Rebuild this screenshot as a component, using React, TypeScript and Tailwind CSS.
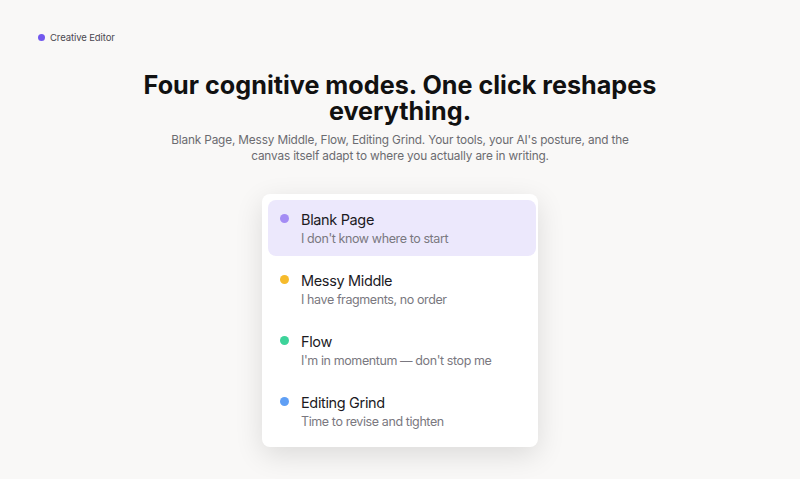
import React from 'react'

const modes = [
  { title: 'Blank Page', desc: "I don't know where to start", dot: 'bg-[#a48cf4]', active: true },
  { title: 'Messy Middle', desc: 'I have fragments, no order', dot: 'bg-[#f6bb2c]', active: false },
  { title: 'Flow', desc: "I'm in momentum — don't stop me", dot: 'bg-[#3dd39a]', active: false },
  { title: 'Editing Grind', desc: 'Time to revise and tighten', dot: 'bg-[#5f9ff5]', active: false },
]

export default function App() {
  return (
    <div className="min-h-screen bg-[#f9f8f7] font-['Inter',sans-serif] flex flex-col">
      <div className="flex items-center gap-[5px] pl-[38px] pt-[31px] h-[44px]">
        <div className="w-[7px] h-[7px] rounded-full bg-[#7258ee]" />
        <span className="text-[9.5px] leading-[12px] tracking-[-0.1px] text-[#4a4750]">Creative Editor</span>
      </div>

      <div className="flex flex-col items-center pt-[28px]">
        <h1 className="w-[540px] text-center text-[25.2px] leading-[26px] font-bold text-[#111]">
          Four cognitive modes. One click reshapes everything.
        </h1>
        <p className="w-[480px] mt-[8px] text-center text-[11.8px] leading-[16px] tracking-[-0.15px] text-[#6b6b70]">
          Blank Page, Messy Middle, Flow, Editing Grind. Your tools, your AI's posture, and the canvas itself adapt to where you actually are in writing.
        </p>

        <div className="mt-[30px] w-[276px] bg-white rounded-[8px] shadow-[0_8px_28px_rgba(0,0,0,0.12)] pt-[6px] pb-[8px] pl-[6px] pr-[2px] flex flex-col gap-[5px]">
          {modes.map(m => (
            <div key={m.title}
                 className={`h-[56px] rounded-[8px] flex items-start gap-[12px] pl-[12px] pt-[11px] ${m.active ? 'bg-[#ece8fc]' : ''}`}>
              <div className={`w-[9px] h-[9px] rounded-full mt-[3px] shrink-0 ${m.dot}`} />
              <div className="flex flex-col">
                <div className="text-[14.5px] leading-[18px] tracking-[-0.35px] text-[#1c1b1f]">{m.title}</div>
                <div className="mt-[2px] text-[12.5px] leading-[16px] tracking-[-0.4px] text-[#7a7880]">{m.desc}</div>
              </div>
            </div>
          ))}
        </div>
      </div>
    </div>
  )
}
